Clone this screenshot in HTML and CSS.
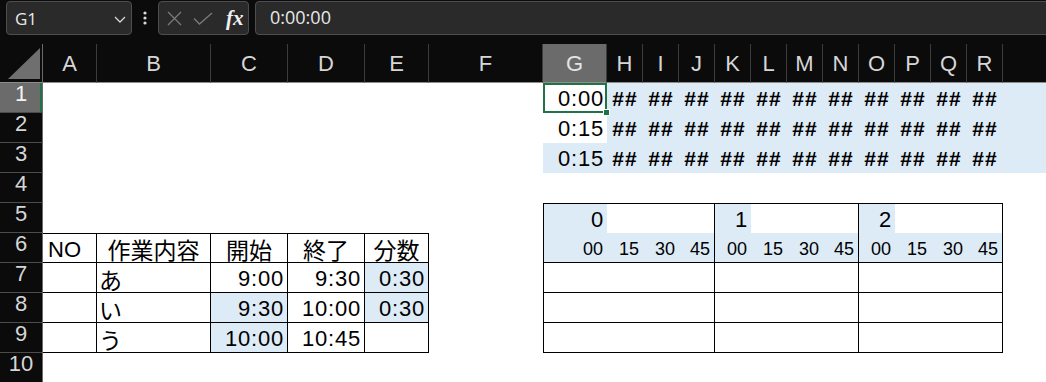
FILE: index.html
```html
<!DOCTYPE html>
<html lang="ja">
<head>
  <meta charset="UTF-8" />
  <title>Book1 - Excel</title>
  <link rel="stylesheet" href="styles.css">
</head>
<body>

  <div class="topbar">
    <div class="namebox">
      <span>G1</span>
      <svg class="chev" width="12" height="7" viewBox="0 0 12 7"><polyline points="1,1 6,6 11,1" fill="none" stroke="#d6d6d6" stroke-width="1.3"/></svg>
    </div>
    <div class="grip">
      <svg width="6" height="16" viewBox="0 0 6 16"><circle cx="3" cy="3" r="1.6"/><circle cx="3" cy="8" r="1.6"/><circle cx="3" cy="13" r="1.6"/></svg>
    </div>
    <div class="fxbox">
      <svg width="15" height="15" viewBox="0 0 15 15"><path d="M1 1 L14 14 M14 1 L1 14" stroke="#7a7a7a" stroke-width="1.3" fill="none"/></svg>
      <svg width="20" height="13" viewBox="0 0 20 13"><polyline points="1,6.5 6.5,12 19,1" stroke="#7a7a7a" stroke-width="1.3" fill="none"/></svg>
      <span class="fx">fx</span>
    </div>
    <div class="formula">0:00:00</div>
  </div>

  <div class="sheet">
    <!-- column headings -->
    <div class="ch corner">
      <svg width="43" height="39" viewBox="0 0 43 39"><polygon points="8,35 40,35 40,4" fill="#6f6f6f"/></svg>
    </div>
    <div class="ch">A</div>
    <div class="ch">B</div>
    <div class="ch">C</div>
    <div class="ch">D</div>
    <div class="ch">E</div>
    <div class="ch">F</div>
    <div class="ch sel">G</div>
    <div class="ch">H</div>
    <div class="ch">I</div>
    <div class="ch">J</div>
    <div class="ch">K</div>
    <div class="ch">L</div>
    <div class="ch">M</div>
    <div class="ch">N</div>
    <div class="ch">O</div>
    <div class="ch">P</div>
    <div class="ch">Q</div>
    <div class="ch">R</div>
    <div class="ch rest"></div>

    <!-- row 1 -->
    <div class="rh sel">1</div>
    <div class="c span6"></div>
    <div class="c num active">0:00<i class="handle"></i></div>
    <div class="c hash fill">##</div>
    <div class="c hash fill">##</div>
    <div class="c hash fill">##</div>
    <div class="c hash fill">##</div>
    <div class="c hash fill">##</div>
    <div class="c hash fill">##</div>
    <div class="c hash fill">##</div>
    <div class="c hash fill">##</div>
    <div class="c hash fill">##</div>
    <div class="c hash fill">##</div>
    <div class="c hash fill">##</div>
    <div class="c fill"></div>

    <!-- row 2 -->
    <div class="rh">2</div>
    <div class="c span6"></div>
    <div class="c num">0:15</div>
    <div class="c hash fill">##</div>
    <div class="c hash fill">##</div>
    <div class="c hash fill">##</div>
    <div class="c hash fill">##</div>
    <div class="c hash fill">##</div>
    <div class="c hash fill">##</div>
    <div class="c hash fill">##</div>
    <div class="c hash fill">##</div>
    <div class="c hash fill">##</div>
    <div class="c hash fill">##</div>
    <div class="c hash fill">##</div>
    <div class="c fill"></div>

    <!-- row 3 -->
    <div class="rh">3</div>
    <div class="c span6"></div>
    <div class="c num fill">0:15</div>
    <div class="c hash fill">##</div>
    <div class="c hash fill">##</div>
    <div class="c hash fill">##</div>
    <div class="c hash fill">##</div>
    <div class="c hash fill">##</div>
    <div class="c hash fill">##</div>
    <div class="c hash fill">##</div>
    <div class="c hash fill">##</div>
    <div class="c hash fill">##</div>
    <div class="c hash fill">##</div>
    <div class="c hash fill">##</div>
    <div class="c fill"></div>

    <!-- row 4 -->
    <div class="rh">4</div>
    <div class="c span-all"></div>

    <!-- row 5 : hour headings -->
    <div class="rh">5</div>
    <div class="c span6"></div>
    <div class="c num fill b-top b-left">0</div>
    <div class="c span3 b-top b-right"></div>
    <div class="c num fill b-top">1</div>
    <div class="c span3 b-top b-right"></div>
    <div class="c num fill b-top">2</div>
    <div class="c span3 b-top b-right"></div>
    <div class="c"></div>

    <!-- row 6 : table headings + minutes -->
    <div class="rh">6</div>
    <div class="c box b-top no">NO</div>
    <div class="c box b-top mid">作業内容</div>
    <div class="c box b-top mid">開始</div>
    <div class="c box b-top mid">終了</div>
    <div class="c box b-top mid">分数</div>
    <div class="c"></div>
    <div class="c min fill b-bottom b-left">00</div>
    <div class="c min fill b-bottom">15</div>
    <div class="c min fill b-bottom">30</div>
    <div class="c min fill b-bottom b-right">45</div>
    <div class="c min fill b-bottom">00</div>
    <div class="c min fill b-bottom">15</div>
    <div class="c min fill b-bottom">30</div>
    <div class="c min fill b-bottom b-right">45</div>
    <div class="c min fill b-bottom">00</div>
    <div class="c min fill b-bottom">15</div>
    <div class="c min fill b-bottom">30</div>
    <div class="c min fill b-bottom b-right">45</div>
    <div class="c"></div>

    <!-- row 7 -->
    <div class="rh">7</div>
    <div class="c box"></div>
    <div class="c box jp">あ</div>
    <div class="c box num">9:00</div>
    <div class="c box num">9:30</div>
    <div class="c box num fill">0:30</div>
    <div class="c"></div>
    <div class="c span4 b-bottom b-left b-right"></div>
    <div class="c span4 b-bottom b-right"></div>
    <div class="c span4 b-bottom b-right"></div>
    <div class="c"></div>

    <!-- row 8 -->
    <div class="rh">8</div>
    <div class="c box"></div>
    <div class="c box jp">い</div>
    <div class="c box num fill">9:30</div>
    <div class="c box num">10:00</div>
    <div class="c box num fill">0:30</div>
    <div class="c"></div>
    <div class="c span4 b-bottom b-left b-right"></div>
    <div class="c span4 b-bottom b-right"></div>
    <div class="c span4 b-bottom b-right"></div>
    <div class="c"></div>

    <!-- row 9 -->
    <div class="rh">9</div>
    <div class="c box"></div>
    <div class="c box jp">う</div>
    <div class="c box num fill">10:00</div>
    <div class="c box num">10:45</div>
    <div class="c box"></div>
    <div class="c"></div>
    <div class="c span4 b-bottom b-left b-right"></div>
    <div class="c span4 b-bottom b-right"></div>
    <div class="c span4 b-bottom b-right"></div>
    <div class="c"></div>

    <!-- row 10 -->
    <div class="rh">10</div>
    <div class="c span-all"></div>
  </div>

</body>
</html>
```

FILE: styles.css
```css
body {
  margin: 0;
  background: #0b0b0b;
  font-family: "Liberation Sans", "Noto Sans CJK JP", sans-serif;
  overflow: hidden;
}

/* formula bar */
.topbar {
  display: flex;
  align-items: center;
  height: 36px;
  padding-left: 6px;
  font-family: "Open Sans", "Noto Sans", sans-serif;
  color: #e8e8e8;
}

.namebox {
  display: flex;
  align-items: center;
  justify-content: space-between;
  box-sizing: border-box;
  width: 126px;
  height: 34px;
  padding: 0 5px 0 8px;
  background: #2a2a2a;
  border: 1px solid #4e4e4e;
  border-radius: 4px;
  font-size: 17px;
}

.namebox .chev {
  margin-top: 2px;
}

.grip {
  display: flex;
  justify-content: center;
  width: 26px;
  fill: #d8d8d8;
}

.fxbox {
  display: flex;
  align-items: center;
  gap: 11px;
  box-sizing: border-box;
  width: 91px;
  height: 34px;
  padding-left: 8px;
  background: #2a2a2a;
  border: 1px solid #4e4e4e;
  border-radius: 4px;
}

.fx {
  margin-left: 2px;
  font-family: "Liberation Serif", serif;
  font-style: italic;
  font-weight: bold;
  font-size: 21px;
  color: #f0f0f0;
}

.formula {
  flex: 1;
  box-sizing: border-box;
  height: 34px;
  margin-left: 6px;
  margin-right: -6px;
  padding-left: 14px;
  background: #2a2a2a;
  border: 1px solid #4e4e4e;
  border-radius: 4px;
  font-size: 18px;
  line-height: 31px;
}

/* grid */
.sheet {
  display: grid;
  grid-template-columns: 43px 54px 114px 77px 77px 64px 114px 64px repeat(11, 36px) 1fr;
  grid-template-rows: 39px repeat(10, 30px);
  margin-top: 8px;
}

.ch {
  box-sizing: border-box;
  background: #0b0b0b;
  color: #d6d6d6;
  border-right: 1px solid #3c3c3c;
  border-bottom: 1px solid #8c8c8c;
  text-align: center;
  font-size: 22px;
  line-height: 39px;
}

.ch.corner {
  border-right-color: #6a6a6a;
}

.ch.corner svg {
  display: block;
}

.ch.rest {
  border-right: none;
}

.ch.sel {
  background: #6b6b6b;
  color: #e4e4e4;
}

.rh {
  box-sizing: border-box;
  background: #0b0b0b;
  color: #d6d6d6;
  border-bottom: 1px solid #4c4c4c;
  border-right: 1px solid #6a6a6a;
  text-align: center;
  font-size: 22px;
  line-height: 22px;
}

.rh.sel {
  background: #6b6b6b;
  color: #f2f2f2;
  box-shadow: inset -2px 0 0 #217346;
}

.c {
  position: relative;
  box-sizing: border-box;
  background: #fff;
  color: #000;
  padding: 1px 4px 0;
  font-size: 22px;
  line-height: 30px;
  white-space: nowrap;
  overflow: hidden;
}

.span3 { grid-column: span 3; }
.span4 { grid-column: span 4; }
.span6 { grid-column: span 6; }
.span-all { grid-column: 2 / -1; }

.fill { background: #ddebf7; }

.num {
  padding-right: 3px;
  text-align: right;
  letter-spacing: 0.8px;
}

.mid { padding-top: 2px; text-align: center; font-size: 23px; }
.jp { padding: 3px 0 0 2px; font-size: 23px; }
.no { padding-left: 5px; }

.hash {
  padding: 1px 0 0;
  text-align: center;
  font-size: 21px;
  font-weight: bold;
  letter-spacing: 1px;
}

.min {
  text-align: right;
  font-size: 18px;
}

.box {
  border-right: 1px solid #000;
  border-bottom: 1px solid #000;
}

.b-top { border-top: 1px solid #000; }
.b-bottom { border-bottom: 1px solid #000; }
.b-left { border-left: 1px solid #000; }
.b-right { border-right: 1px solid #000; }

/* active cell */
.active {
  overflow: visible;
  box-shadow: inset 0 0 0 2px #217346;
}

.handle {
  position: absolute;
  right: -3px;
  bottom: -3px;
  width: 5px;
  height: 5px;
  background: #217346;
  border: 1px solid #fff;
  z-index: 2;
}
```
